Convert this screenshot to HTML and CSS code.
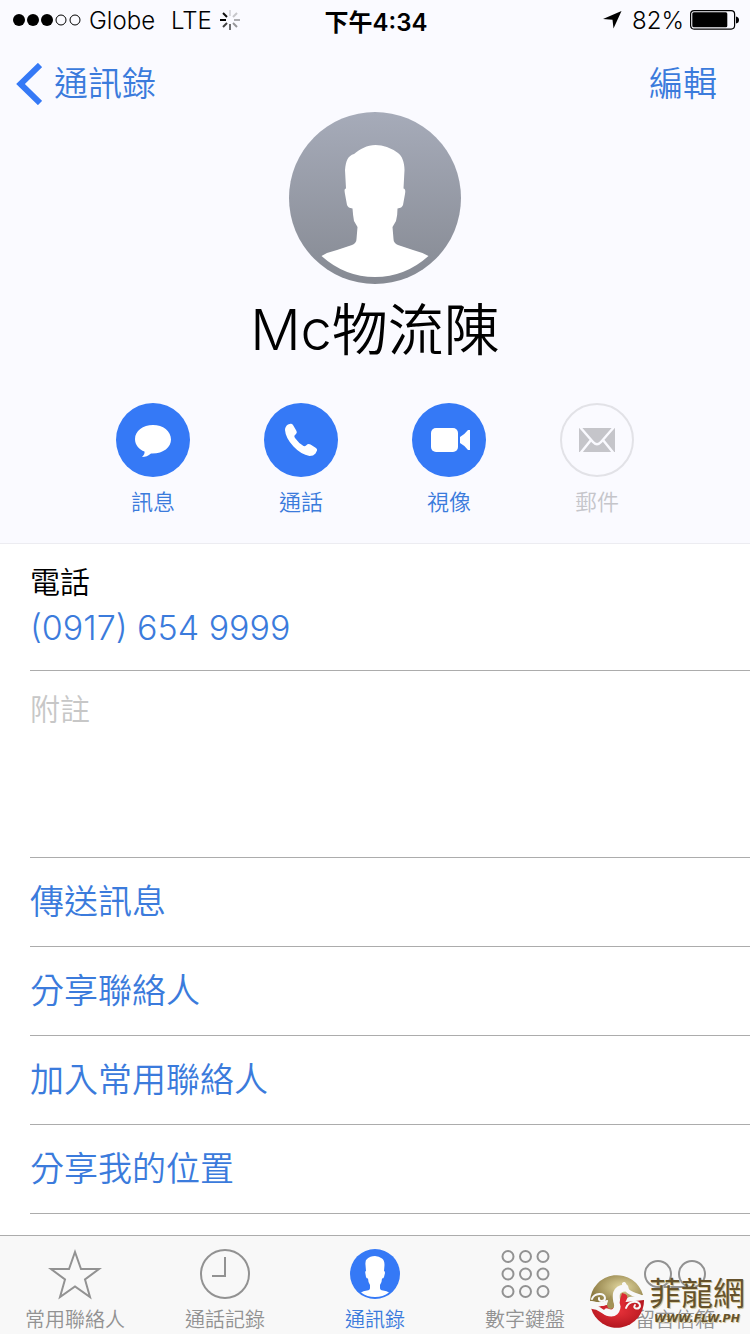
FILE: index.html
```html
<!DOCTYPE html>
<html lang="zh-Hant">
<head>
    <meta charset="utf-8">
    <meta name="viewport" content="width=device-width, initial-scale=1">
    <title>Mc物流陳</title>
    <link rel="stylesheet" href="styles.css">
</head>
<body>
    <header class="contact-header">
        <div class="status-bar">
            <div class="status-left">
                <svg class="signal" width="68" height="12" viewBox="0 0 68 12">
                    <circle cx="6" cy="6" r="6"/>
                    <circle cx="20" cy="6" r="6"/>
                    <circle cx="34" cy="6" r="6"/>
                    <circle cx="48" cy="6" r="5" fill="none" stroke="#000"/>
                    <circle cx="62" cy="6" r="5" fill="none" stroke="#000"/>
                </svg>
                <span>Globe</span>
                <span class="network">LTE</span>
                <svg class="spinner" width="20" height="20" viewBox="-10 -10 20 20" stroke="#000" stroke-width="2">
                    <path d="M-4 0H-10"/>
                    <path d="M-3 -3L-7 -7" opacity=".95"/>
                    <path d="M0 -4V-10" opacity=".12"/>
                    <path d="M3 -3L7 -7" opacity=".2"/>
                    <path d="M4 0H10" opacity=".3"/>
                    <path d="M3 3L7 7" opacity=".4"/>
                    <path d="M0 4V10" opacity=".55"/>
                    <path d="M-3 3L-7 7" opacity=".75"/>
                </svg>
            </div>
            <div class="status-time">下午4:34</div>
            <div class="status-right">
                <svg width="19" height="18" viewBox="0 0 19 18"><path d="M18.500 0L10.500 17.500L9.500 8.800L0 8Z"/></svg>
                <span class="percent">82%</span>
                <svg width="49" height="20" viewBox="0 0 49 20">
                    <rect x=".6" y=".6" width="44" height="18.500" rx="3.500" fill="none" stroke="#000" stroke-width="1.200"/>
                    <rect x="2.300" y="2.300" width="35" height="15" rx="1.500"/>
                    <path d="M46 6.500Q49 7 49 10T46 13.500Z"/>
                </svg>
            </div>
        </div>

        <nav class="nav-bar">
            <a href="#" class="back">
                <svg width="26" height="42" viewBox="0 0 26 42"><path d="M24 2L4.500 21L24 40" fill="none" stroke="#3579f6" stroke-width="6"/></svg>
                通訊錄
            </a>
            <a href="#">編輯</a>
        </nav>

        <svg class="avatar" width="172" height="172" viewBox="0 0 172 172">
            <defs>
                <linearGradient id="avatarFill" x1="0" y1="0" x2="0" y2="1">
                    <stop offset="0" stop-color="#a6abb9"/>
                    <stop offset="1" stop-color="#868a93"/>
                </linearGradient>
            </defs>
            <circle cx="86" cy="86" r="86" fill="url(#avatarFill)"/>
            <path fill="#fff" d="M86.500 33C78 33 71 37 65 42C59 44 57 48 56 58L57 76.500C55 77 55.500 79 56 82L58 93Q59 96 63.500 96.500Q64 104 65 109L68.500 115L67.500 127Q67.500 131 63 133L48 138Q39 140 32.500 144Q56 165 86 165T139.500 144Q132 140 124 138L109 133Q104.500 131 104.500 127L103.500 115L107 109Q108.500 104 108.500 96.500Q113 96 114 93L116 82C116.500 79 116.500 77 114.500 76.500L115.500 58C115.500 50 113 44 109 41Q98 33 86.500 33Z"/>
        </svg>
        <h1>Mc物流陳</h1>

        <div class="actions">
            <button>
                <svg width="74" height="74" viewBox="0 0 74 74">
                    <circle cx="37" cy="37" r="37" fill="#3579f6"/>
                    <path fill="#fff" d="M37 22C27 22 19 28 19 36C19 42 23 46.500 28.500 48.500Q29 51 26 54Q31 54 35 50.500C47 51 55 44.500 55 36.500C55 28 47 22 37 22Z"/>
                </svg>
                <span>訊息</span>
            </button>
            <button>
                <svg width="74" height="74" viewBox="0 0 74 74">
                    <circle cx="37" cy="37" r="37" fill="#3579f6"/>
                    <path fill="#fff" d="M24 21.500L26.500 20.700Q28 20.500 29 22L32.500 28Q33.300 30 32 31L30.500 32.500Q30 33.500 31 35Q34.500 40 39.500 43Q41 43.500 42 42.500L43.500 41.300Q45 40.700 46.500 41.500L52 45Q53.500 46 53 47.500L51.500 50.500Q49.500 53 45.500 53Q37 51.500 29.500 43.500Q21.500 35 21 27Q21 23.500 24 21.500Z"/>
                </svg>
                <span>通話</span>
            </button>
            <button>
                <svg width="74" height="74" viewBox="0 0 74 74">
                    <circle cx="37" cy="37" r="37" fill="#3579f6"/>
                    <rect x="19" y="25" width="27" height="24" rx="5" fill="#fff"/>
                    <path fill="#fff" d="M48 34Q52 32 56 27H58V47H56Q52 42 48 40Z"/>
                </svg>
                <span>視像</span>
            </button>
            <button disabled>
                <svg width="74" height="74" viewBox="0 0 74 74">
                    <circle cx="37" cy="37" r="36" fill="none" stroke="#e2e2e7" stroke-width="2"/>
                    <rect x="19" y="25" width="36" height="24" fill="#c5c5ca"/>
                    <path d="M19.500 23.500L33 39Q37 43.500 41 39L54.500 23.500M31 37L20.500 50M43 37L53.500 50" fill="none" stroke="#fafaff" stroke-width="2.500"/>
                </svg>
                <span>郵件</span>
            </button>
        </div>
    </header>

    <main class="details">
        <div class="field phone">
            <div class="field-label">電話</div>
            <a href="tel:09176549999">(0917) 654 9999</a>
        </div>
        <div class="field notes">
            <textarea placeholder="附註" aria-label="附註"></textarea>
        </div>
        <a href="#" class="row">傳送訊息</a>
        <a href="#" class="row">分享聯絡人</a>
        <a href="#" class="row">加入常用聯絡人</a>
        <a href="#" class="row">分享我的位置</a>
    </main>

    <footer class="tab-bar">
        <a href="#">
            <svg width="54" height="52" viewBox="0 0 54 52"><path d="M27 4L33 21H51L37 31.500L42 49L27 38.500L12 49L17 31.500L3 21H21Z" fill="none" stroke="#929292" stroke-width="2"/></svg>
            常用聯絡人
        </a>
        <a href="#">
            <svg width="52" height="52" viewBox="0 0 52 52" fill="none" stroke="#929292" stroke-width="2"><circle cx="26" cy="26" r="24"/><path d="M26 9V28H13"/></svg>
            通話記錄
        </a>
        <a href="#" class="active">
            <svg width="52" height="52" viewBox="-1 -1 52 52">
                <circle cx="25" cy="25" r="25" fill="#3579f6"/>
                <path fill="#fff" d="M25 7Q20 7 17 10Q15 11 15.500 16L16 22Q15 22 15.300 24L16 28Q16.500 29.500 18 29.500Q18 33 20 36V39Q20 41 17 41.500Q13 42 11 43.500Q17 48 25 48T39 43.500Q37 42 33 41.500Q30 41 30 39V36Q32 33 32 29.500Q33.500 29.500 34 28L35 24Q35 22 34 22L34.500 16Q34.500 11 32 9.500Q29 7 25 7Z"/>
            </svg>
            通訊錄
        </a>
        <a href="#">
            <svg width="52" height="52" viewBox="0 0 52 52" fill="none" stroke="#929292" stroke-width="2">
                <circle cx="9" cy="8.500" r="5.500"/><circle cx="26.500" cy="8.500" r="5.500"/><circle cx="44" cy="8.500" r="5.500"/>
                <circle cx="9" cy="26" r="5.500"/><circle cx="26.500" cy="26" r="5.500"/><circle cx="44" cy="26" r="5.500"/>
                <circle cx="9" cy="43.500" r="5.500"/><circle cx="26.500" cy="43.500" r="5.500"/><circle cx="44" cy="43.500" r="5.500"/>
            </svg>
            數字鍵盤
        </a>
        <a href="#">
            <svg width="64" height="52" viewBox="0 0 64 52" fill="none" stroke="#929292" stroke-width="2"><circle cx="15" cy="26" r="13"/><circle cx="49" cy="26" r="13"/><path d="M15 39H49"/></svg>
            留言信箱
        </a>
    </footer>

    <div class="watermark">
        <svg width="56" height="56" viewBox="0 0 56 56">
            <defs>
                <radialGradient id="gold" cx=".6" cy=".4" r=".6">
                    <stop offset="0" stop-color="#e2d8a0"/>
                    <stop offset="1" stop-color="#8c7a42"/>
                </radialGradient>
                <radialGradient id="red" cx=".5" cy=".4" r=".6">
                    <stop offset="0" stop-color="#e8323a"/>
                    <stop offset="1" stop-color="#b3161f"/>
                </radialGradient>
            </defs>
            <path d="M1 28A27 27 0 0 1 54 22L40 24L28 32Z" fill="url(#gold)"/>
            <path d="M2 35L28 30L55 27A27 27 0 0 1 2 35Z" fill="url(#red)"/>
            <g fill="none" stroke="#f8f8f8" stroke-linecap="round">
                <path d="M36 15C25 16 27 24 28 30C29 38 25 42 18 39" stroke-width="7"/>
                <path d="M35 11L38 17C42 22 47 21 54 25M20 41C12 40 12 34 3 34M18 29C12 33 6 31 2 30" stroke-width="4"/>
                <path d="M3 26C5 20 16 19 16 25C16 29 9 29 10 25M37 35C40 27 51 27 51 33C50 37 43 36 46 32" stroke-width="2"/>
            </g>
            <path d="M33 20Q41 21 37 28Q34 32 37 37Q29 33 31 27Z" fill="#dc2932"/>
            <path d="M22 22Q19 27 18 31Q18 36 22 36Q27 35 24 29Q22 26 22 22Z" fill="#a39256"/>
        </svg>
        <div class="watermark-text">
            <span class="watermark-name">菲龍網</span>
            <span class="watermark-url">WWW.FLW.PH</span>
        </div>
    </div>
</body>
</html>
```
FILE: styles.css
```css
* {
    box-sizing: border-box;
}
body {
    margin: 0;
    min-height: 100vh;
    display: flex;
    flex-direction: column;
    position: relative;
    background: #fff;
    color: #000;
    font-family: 'Inter', 'Noto Sans CJK TC', sans-serif;
    font-weight: 350;
}
a {
    color: #3b7bdc;
    text-decoration: none;
}
svg {
    display: block;
    flex-shrink: 0;
}
.contact-header {
    background: #fafaff;
    border-bottom: 1px solid #ececf1;
    padding-bottom: 25px;
}
.status-bar {
    display: grid;
    grid-template-columns: 1fr auto 1fr;
    align-items: center;
    height: 40px;
    padding: 0 11px 0 13px;
    font-size: 24px;
}
.status-left, .status-right {
    display: flex;
    align-items: center;
}
.status-left {
    gap: 8px;
}
.network {
    margin-left: 8px;
}
.status-right {
    justify-content: flex-end;
    gap: 6px;
}
.percent {
    margin-left: 4px;
}
.status-time {
    font-weight: 600;
}
.nav-bar {
    display: flex;
    justify-content: space-between;
    align-items: center;
    height: 88px;
    padding: 0 33px 0 16px;
    font-size: 34px;
    line-height: 48px;
}
.back {
    display: flex;
    align-items: center;
    gap: 12px;
}
.avatar {
    margin: -16px auto 0;
}
h1 {
    margin: 12px 0 0;
    font-size: 56px;
    line-height: 68px;
    font-weight: 350;
    text-align: center;
}
.actions {
    display: flex;
    justify-content: center;
    gap: 74px;
    margin-top: 39px;
}
.actions button {
    width: 74px;
    padding: 0;
    border: 0;
    background: none;
    color: #3b7bdc;
    font: inherit;
    font-size: 22px;
    line-height: 32px;
}
.actions button:disabled {
    color: #c5c5ca;
}
.actions span {
    display: block;
    margin-top: 9px;
}
.details {
    flex: 1;
    padding-left: 30px;
}
.field, .row {
    border-bottom: 1px solid #acacac;
}
.phone {
    padding: 16px 0 18px;
    font-size: 34px;
    line-height: 48px;
}
.field-label {
    font-size: 30px;
    line-height: 44px;
}
.phone a {
    display: block;
}
.notes {
    padding: 16px 0;
}
textarea {
    display: block;
    width: 100%;
    height: 154px;
    padding: 0;
    border: 0;
    outline: none;
    resize: none;
    background: none;
    font: inherit;
    font-size: 30px;
    line-height: 44px;
}
textarea::placeholder {
    color: #c7c7c7;
}
.row {
    display: block;
    font-size: 34px;
    line-height: 88px;
}
.tab-bar {
    display: grid;
    grid-template-columns: repeat(5, 1fr);
    height: 99px;
    border-top: 1px solid #acacac;
    background: #f8f8f8;
}
.tab-bar a {
    display: flex;
    flex-direction: column;
    align-items: center;
    padding-top: 12px;
    color: #929292;
    font-size: 20px;
    line-height: 40px;
    white-space: nowrap;
}
.tab-bar .active {
    color: #3b7bdc;
}

/* site logo laid over the last tab */
.watermark {
    position: absolute;
    right: 5px;
    bottom: 5px;
    display: flex;
    align-items: center;
    gap: 4px;
}
.watermark-text {
    display: flex;
    flex-direction: column;
    align-items: center;
    color: #65522c;
    text-shadow: 1px 1px 0 #d8cba0;
}
.watermark-name {
    font-size: 32px;
    line-height: 36px;
    font-weight: 400;
}
.watermark-url {
    font-family: 'DejaVu Sans', sans-serif;
    font-size: 11px;
    line-height: 14px;
    font-weight: 700;
    font-style: italic;
}
```
